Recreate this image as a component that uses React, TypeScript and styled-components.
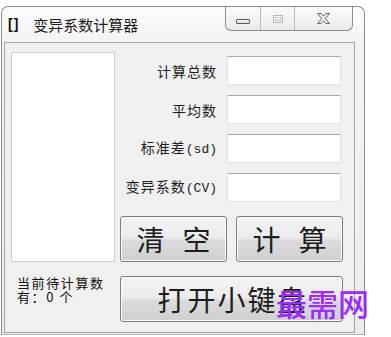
import React from "react";
import styled, { createGlobalStyle } from "styled-components";

const Global = createGlobalStyle`
  html, body {
    margin: 0;
    padding: 0;
    background: #ffffff;
  }
  body {
    font-family: "Noto Sans CJK SC", "Liberation Sans", sans-serif;
  }
`;

const Page = styled.div`
  position: relative;
  width: 391px;
  height: 337px;
  padding: 6px 0 0 1px;
  box-sizing: border-box;
  overflow: hidden;
`;

const Window = styled.div`
  width: 364px;
  height: 329px;
  box-sizing: border-box;
  border: 1px solid #8d8d8d;
  border-bottom-color: #b4b4b4;
  border-radius: 7px 7px 0 0;
  background: linear-gradient(#fbfbfb 0px, #f3f3f3 36px, #ececec 100%);
  display: flex;
  flex-direction: column;
`;

const TitleBar = styled.div`
  height: 35px;
  display: flex;
  align-items: flex-start;
  justify-content: space-between;
`;

const Title = styled.div`
  height: 35px;
  display: flex;
  align-items: center;
  padding-left: 6px;
  gap: 14px;
  font-size: 15px;
  line-height: 15px;
  color: #1c1c1c;
`;

const AppIcon = styled.span`
  font-family: "Liberation Sans", sans-serif;
  font-weight: bold;
  font-size: 14px;
  letter-spacing: 1px;
  color: #111;
`;

const CaptionButtons = styled.div`
  display: flex;
  margin-right: 11px;
  height: 23px;
  border: 1px solid #8e8e8e;
  border-top: none;
  border-radius: 0 0 6px 6px;
  overflow: hidden;
  background: linear-gradient(#fbfbfb, #eaeaea);
`;

const CaptionButton = styled.div<{ $w: number; $last?: boolean }>`
  width: ${p => p.$w}px;
  display: flex;
  align-items: center;
  justify-content: center;
  border-right: ${p => (p.$last ? "none" : "1px solid #b9b9b9")};
`;

const MinGlyph = styled.div`
  width: 12px;
  height: 3px;
  margin-top: 5px;
  border: 1px solid #5a5a5a;
  border-radius: 1px;
  background: linear-gradient(#ffffff, #d8d8d8);
`;

const MaxGlyph = styled.div`
  width: 8px;
  height: 6px;
  border: 1px solid #b5b5b5;
  display: flex;
  align-items: center;
  justify-content: center;
  &::after {
    content: "";
    width: 4px;
    height: 2px;
    border: 1px solid #c8c8c8;
  }
`;

const Client = styled.div`
  flex: 1;
  margin: 0 9px 1px 2px;
  border: 1px solid #a6a6a6;
  background: #f0f0f0;
  padding: 9px 0 0 6px;
  display: grid;
  grid-template-columns: 104px 223px;
  grid-template-rows: 210px 46px;
  column-gap: 5px;
  row-gap: 14px;
`;

const ListBox = styled.div`
  border: 1px solid #cfcfcf;
  background: #ffffff;
`;

const Form = styled.div`
  display: flex;
  flex-direction: column;
  padding-top: 4px;
  gap: 10px;
`;

const Row = styled.div`
  display: flex;
  align-items: center;
  justify-content: flex-end;
  gap: 10px;
  padding-right: 2px;
  height: 29px;
`;

const Label = styled.span`
  font-size: 14px;
  line-height: 16px;
  letter-spacing: 1px;
  color: #1e1e1e;
  white-space: nowrap;
`;

const Latin = styled.span`
  font-family: "Liberation Mono", monospace;
  font-size: 13px;
  letter-spacing: 0;
`;

const Input = styled.div`
  width: 114px;
  height: 29px;
  box-sizing: border-box;
  background: #ffffff;
  border: 1px solid #e0e2e8;
  border-top-color: #a9abb2;
`;

const ButtonRow = styled.div`
  display: flex;
  gap: 9px;
  margin-top: 4px;
`;

const Button = styled.div<{ $w: number }>`
  width: ${p => p.$w}px;
  height: 46px;
  box-sizing: border-box;
  border: 1px solid #7c7c7c;
  border-radius: 3px;
  box-shadow: inset 0 0 0 1px #fbfbfb;
  background: linear-gradient(#f3f3f3 0%, #ebebeb 48%, #dcdcdc 52%, #cfcfcf 100%);
  display: flex;
  align-items: center;
  justify-content: center;
  padding-left: 2px;
  font-size: 28px;
  line-height: 30px;
  letter-spacing: 2px;
  color: #1c1c1c;
  white-space: pre;
`;

const Count = styled.div`
  display: flex;
  flex-direction: column;
  padding-left: 6px;
  font-size: 13px;
  line-height: 14px;
  letter-spacing: 1.6px;
  color: #111111;
`;

const CountLine = styled.span`
  display: block;
  height: 14px;
  white-space: nowrap;
`;

const Watermark = styled.div`
  position: absolute;
  left: 276px;
  top: 285px;
  font-size: 31px;
  line-height: 36px;
  font-weight: 500;
  color: #9a2cff;
  letter-spacing: 0;
  white-space: nowrap;
`;

const CloseGlyph = () => (
  <svg width="15" height="11" viewBox="0 0 15 11">
    <path
      d="M1.5 0.5 H5 L7.5 3.2 L10 0.5 H13.5 L9.3 5.5 L13.5 10.5 H10 L7.5 7.8 L5 10.5 H1.5 L5.7 5.5 Z"
      fill="#f4f4f4"
      stroke="#606060"
      strokeWidth="1"
      strokeLinejoin="round"
    />
  </svg>
);

export default function App() {
  return (
    <Page>
      <Global />
      <Window>
        <TitleBar>
          <Title>
            <AppIcon>[]</AppIcon>
            <span>变异系数计算器</span>
          </Title>
          <CaptionButtons>
            <CaptionButton $w={34}>
              <MinGlyph />
            </CaptionButton>
            <CaptionButton $w={33}>
              <MaxGlyph />
            </CaptionButton>
            <CaptionButton $w={57} $last>
              <CloseGlyph />
            </CaptionButton>
          </CaptionButtons>
        </TitleBar>
        <Client>
          <ListBox />
          <Form>
            <Row>
              <Label>计算总数</Label>
              <Input />
            </Row>
            <Row>
              <Label>平均数</Label>
              <Input />
            </Row>
            <Row>
              <Label>
                标准差<Latin>(sd)</Latin>
              </Label>
              <Input />
            </Row>
            <Row>
              <Label>
                变异系数<Latin>(CV)</Latin>
              </Label>
              <Input />
            </Row>
            <ButtonRow>
              <Button $w={107}>{"清\u2002空"}</Button>
              <Button $w={107}>{"计\u2002算"}</Button>
            </ButtonRow>
          </Form>
          <Count>
            <CountLine>当前待计算数</CountLine>
            <CountLine>有：0 个</CountLine>
          </Count>
          <Button $w={223}>打开小键盘</Button>
        </Client>
      </Window>
      <Watermark>最需网</Watermark>
    </Page>
  );
}
